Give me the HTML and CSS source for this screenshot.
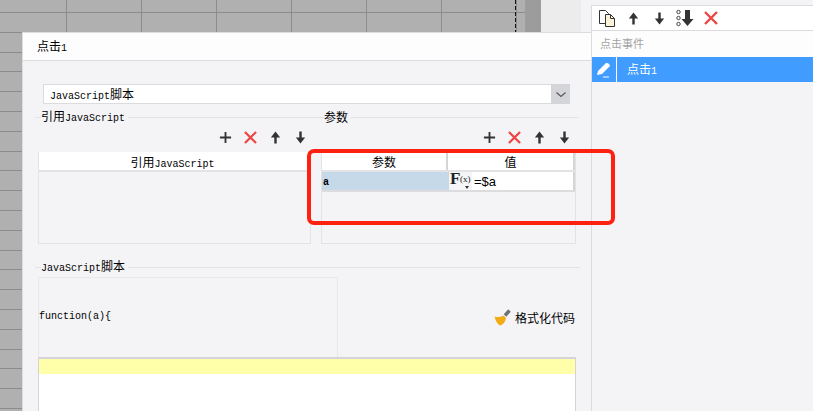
FILE: index.html
```html
<!DOCTYPE html>
<html lang="zh">
<head>
<meta charset="utf-8">
<title>点击事件</title>
<link rel="stylesheet" href="styles.css">
</head>
<body>
<div class="stage">
  <div class="desk">
    <div class="sheet"></div>
    <div class="sheet-dark"></div>
    <div class="sheet-light"></div>
    <div class="dialog">
      <div class="dialog-title">点击<span class="lat">1</span></div>
      <div class="dialog-body">
        <div class="select">
          <span class="select-text"><span class="lat">JavaScript</span>脚本</span>
          <span class="select-btn"><svg width="12" height="7" viewBox="0 0 12 7"><path d="M1.5 1.5 6 5.5l4.500-4" fill="none" stroke="#555" stroke-width="1.100"/></svg></span>
        </div>
        <div class="columns">
          <section class="col col-left">
            <div class="legend"><span class="legend-text">引用<span class="lat">JavaScript</span></span></div>
            <div class="tools">
              <svg class="ico" viewBox="0 0 14 14"><path d="M7 1v12M1 7h12" stroke="#333" stroke-width="2"/></svg>
              <svg class="ico" viewBox="0 0 14 14"><path d="M1 1l12 12M13 1 1 13" stroke="#ee4444" stroke-width="2.400"/></svg>
              <svg class="ico" viewBox="0 0 14 14"><path d="M7 .5 12 7H8.300v6.500H5.700V7H2z" fill="#333"/></svg>
              <svg class="ico" viewBox="0 0 14 14"><path d="M7 13.500 12 7H8.300V.5H5.700V7H2z" fill="#333"/></svg>
            </div>
            <div class="table">
              <div class="thead"><div class="th th-ref"><span>引用<span class="lat">JavaScript</span></span></div></div>
            </div>
          </section>
          <section class="col col-right">
            <div class="legend"><span class="legend-text">参数</span></div>
            <div class="tools">
              <svg class="ico" viewBox="0 0 14 14"><path d="M7 1v12M1 7h12" stroke="#333" stroke-width="2"/></svg>
              <svg class="ico" viewBox="0 0 14 14"><path d="M1 1l12 12M13 1 1 13" stroke="#ee4444" stroke-width="2.400"/></svg>
              <svg class="ico" viewBox="0 0 14 14"><path d="M7 .5 12 7H8.300v6.500H5.700V7H2z" fill="#333"/></svg>
              <svg class="ico" viewBox="0 0 14 14"><path d="M7 13.500 12 7H8.300V.5H5.700V7H2z" fill="#333"/></svg>
            </div>
            <div class="table">
              <div class="thead">
                <div class="th th-param">参数</div>
                <div class="th th-value">值</div>
              </div>
              <div class="row">
                <div class="cell-name">a</div>
                <div class="cell-fx"><span class="fx-f">F</span><span class="fx-x">(x)</span><i class="fx-caret"></i></div>
                <div class="cell-value">=$a</div>
              </div>
            </div>
          </section>
        </div>
        <section class="script">
          <div class="legend"><span class="legend-text"><span class="lat">JavaScript</span>脚本</span></div>
          <div class="script-top">
            <div class="fn-box"><span class="lat">function(a){</span></div>
            <div class="format">
              <svg class="broom" width="17" height="17" viewBox="0 0 17 17"><path d="M11 6.500 15.500 1.500" stroke="#6d7078" stroke-width="3.400"/><path d="M0.500 7.500C4 8.500 7 8 9.500 6.500L12 9C11.500 12.500 9.500 15.500 6 16.500 3 15 1.500 11.500 0.500 7.500z" fill="#f2ab14"/></svg>
              <span>格式化代码</span>
            </div>
          </div>
          <div class="editor"><div class="editor-line"></div></div>
        </section>
      </div>
    </div>
    <div class="callout"></div>
  </div>
  <aside class="panel">
    <div class="panel-inner">
      <div class="panel-tools">
        <svg class="p-copy" width="18" height="18" viewBox="0 0 18 18"><path d="M1.500 1.500h6l3 3v10h-9z" fill="#fff" stroke="#333"/><path d="M7.500 5.500h5l4 4v8h-9z" fill="#fdf3d8" stroke="#333"/><path d="M12.500 5.500v4h4" fill="none" stroke="#333"/></svg>
        <svg class="p-ico p-first" viewBox="0 0 14 14"><path d="M7 .5 12 7H8.300v6.500H5.700V7H2z" fill="#333"/></svg>
        <svg class="p-ico" viewBox="0 0 14 14"><path d="M7 13.500 12 7H8.300V.5H5.700V7H2z" fill="#333"/></svg>
        <svg class="p-bottom" width="18" height="18" viewBox="0 0 18 18"><circle cx="2.500" cy="3" r="1.700" fill="none" stroke="#444"/><circle cx="2.500" cy="9" r="1.700" fill="none" stroke="#444"/><circle cx="2.500" cy="15" r="1.700" fill="none" stroke="#444"/><path d="M9 1h5v9h3.500L11.500 17 5.500 10H9z" fill="#333"/></svg>
        <svg class="p-ico" viewBox="0 0 14 14"><path d="M1 1l12 12M13 1 1 13" stroke="#ee4444" stroke-width="2.400"/></svg>
      </div>
      <div class="panel-head">点击事件</div>
      <div class="event">
        <div class="event-icon"><svg width="16" height="16" viewBox="0 0 16 16"><path d="M1 13 2 9 9.500 1.500C11 0.500 13.500 1.500 14 4L6 12z" fill="#fff"/><path d="M7 15h6" stroke="#fff" stroke-width="1"/></svg></div>
        <div class="event-name">点击<span class="lat">1</span></div>
      </div>
    </div>
  </aside>
</div>
</body>
</html>
```

FILE: styles.css
```css
* { box-sizing: border-box; }
html, body { margin: 0; padding: 0; }
body {
  width: 813px;
  height: 411px;
  overflow: hidden;
  background: #f4f4f7;
  font-family: "Noto Sans CJK SC", "Liberation Mono", sans-serif;
  font-size: 12px;
  color: #000;
}
.lat { font-family: "Liberation Mono", "Noto Sans CJK SC", monospace; font-size: 10px; }

.stage { display: flex; width: 813px; height: 411px; }
.desk { position: relative; width: 591px; height: 411px; flex: none; }

.sheet {
  position: absolute;
  left: 0; top: 0;
  width: 525px; height: 411px;
  background-color: #b0b0b0;
  background-image:
    repeating-linear-gradient(to right, transparent 0, transparent 66px, #8c8c8c 66px, #8c8c8c 67px, transparent 67px, transparent 75px),
    repeating-linear-gradient(to bottom, transparent 0, transparent 12px, #8c8c8c 12px, #8c8c8c 13px, transparent 13px, transparent 19.800px);
}
.sheet::after {
  content: "";
  position: absolute;
  left: 515px; top: 0;
  width: 1px; height: 32px;
  background: repeating-linear-gradient(to bottom, #111 0, #111 4px, transparent 4px, transparent 6px);
}
.sheet-dark { position: absolute; left: 525px; top: 0; width: 16px; height: 411px; background: #9c9c9c; }
.sheet-light { position: absolute; left: 541px; top: 0; width: 40px; height: 411px; background: #ececec; }

.dialog {
  position: absolute;
  left: 22px; top: 32px;
  width: 569px; height: 379px;
  background: #f4f4f7;
  border-left: 1px solid #dcdcdf;
  border-top: 1px solid #dcdcdf;
  display: flex;
  flex-direction: column;
}
.dialog-title {
  height: 28px;
  flex: none;
  padding-left: 14px;
  line-height: 26px;
  background: #fdfdfd;
  border-bottom: 1px solid #dcdcdf;
}
.dialog-body { flex: 1; padding: 23px 11px 0 15px; position: relative; }

.select {
  display: flex;
  margin-left: 5px;
  width: 527px;
  height: 20px;
  background: #fff;
  border: 1px solid #dcdcdf;
}
.select-text { flex: 1; padding-left: 6px; line-height: 18px; }
.select-btn {
  width: 19px;
  margin: -1px -1px -1px 0;
  background: #d4d5d8;
  display: flex;
  align-items: center;
  justify-content: center;
}

.columns { display: flex; margin-top: 4px; }
.col { display: flex; flex-direction: column; }
.col-left { width: 283px; margin-left: -3px; }
.col-right { width: 261px; }

.legend {
  height: 18px;
  display: flex;
  align-items: center;
  padding-left: 6px;
  background: linear-gradient(#e3e3e6, #e3e3e6) left 9px / 100% 1px no-repeat;
}
.legend-text { background: #f4f4f7; padding: 0 3px 0 0; line-height: 18px; }

.tools {
  height: 18px;
  margin: 2px 0 6px;
  display: flex;
  align-items: center;
  justify-content: flex-end;
  gap: 12px;
  padding-right: 11px;
}
.col-right .tools { padding-right: 8px; }
.ico { width: 13px; height: 13px; flex: none; }

.table { height: 92px; border: 1px solid #e3e3e6; border-top: 0; }
.col-left .table { margin-left: 3px; width: 273px; }
.col-right .table { width: 255px; margin-left: 3px; }

.thead { display: flex; height: 20px; background: #fff; border-bottom: 2px solid #e3e3e6; }
.th { flex: 1; text-align: center; line-height: 20px; }
.th-ref { padding-right: 4px; }
.th-param { flex: none; width: 126px; border-right: 2px solid #d5d5d8; }
.th-value { border-right: 2px solid #d5d5d8; }

.row { display: flex; height: 20px; border-bottom: 2px solid #dcdcdf; }
.cell-name {
  width: 127px;
  background: #c6d9e8;
  padding-left: 1px;
  font: bold 10px/22px "Liberation Mono", monospace;
}
.cell-fx { width: 23px; position: relative; background: #f5f5f7; }
.fx-f { position: absolute; left: 1px; top: -2px; font: bold 17px/18px "Liberation Serif", serif; color: #222; }
.fx-x { position: absolute; left: 11px; top: 0; font: 9px/15px "Liberation Serif", serif; color: #222; }
.fx-caret {
  position: absolute;
  right: 3px; bottom: 1px;
  border-left: 2.500px solid transparent;
  border-right: 2.500px solid transparent;
  border-top: 3px solid #333;
}
.cell-value {
  flex: 1;
  background: #fff;
  border-right: 2px solid #d5d5d8;
  padding-left: 2px;
  font: 13px/20px "Liberation Sans", sans-serif;
}

.script { margin-top: 14px; margin-left: -3px; }
.script-top { display: flex; align-items: center; justify-content: space-between; margin-left: 3px; width: 538px; height: 80px; margin-top: 1px; }
.fn-box {
  width: 300px;
  height: 80px;
  border: 1px solid #e8e8ea;
  border-bottom: 0;
  display: flex;
  align-items: center;
  padding-bottom: 3px;
}
.format { display: flex; align-items: center; gap: 4px; padding-right: 1px; }
.broom { flex: none; }
.editor {
  margin-left: 3px;
  width: 538px;
  height: 60px;
  background: #fff;
  border: 1px solid #d4d4d8;
  border-bottom: 0;
  border-top-width: 2px;
}
.editor-line { height: 15px; background: #ffffaa; }

.callout {
  position: absolute;
  left: 307px; top: 149px;
  width: 308px; height: 76px;
  border: 4px solid #ff2010;
  border-radius: 7px;
}

.panel { flex: 1; padding-top: 5px; background: #f4f4f7; }
.panel-inner { height: 406px; border-left: 1px solid #dcdcdf; border-top: 1px solid #dcdcdf; }
.panel-tools {
  height: 25px;
  display: flex;
  align-items: center;
  background: #fff;
  border-bottom: 1px solid #dcdcdf;
  padding-left: 6px;
}
.p-copy { flex: none; }
.p-ico { width: 13px; height: 13px; flex: none; margin-left: 13px; }
.p-first { margin-left: 11px; }
.p-bottom { flex: none; margin-left: 10px; }
.p-bottom + .p-ico { margin-left: 10px; width: 14px; height: 14px; }
.panel-head {
  height: 26px;
  background: #fdfdfd;
  padding-left: 8px;
  color: #a3a3a3;
  font-size: 11px;
  line-height: 25px;
}
.event { display: flex; height: 25px; background: #409cff; color: #fff; }
.event-icon {
  width: 25px;
  border-right: 1px solid #fff;
  display: flex;
  align-items: center;
  justify-content: center;
}
.event-name { padding-left: 10px; line-height: 24px; }
```
